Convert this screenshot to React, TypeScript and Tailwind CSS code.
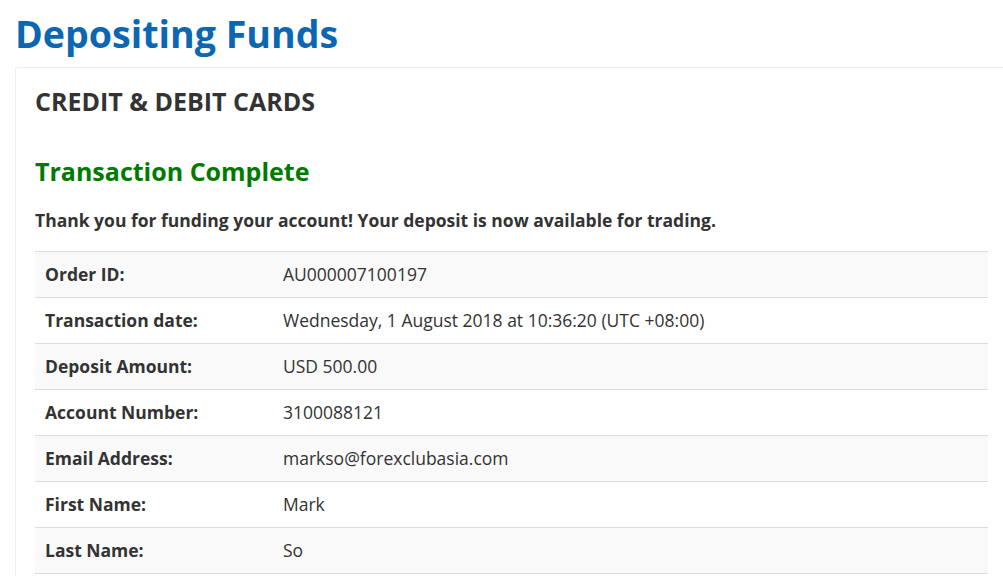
const rows: { label: string; value: string }[] = [
  { label: "Order ID:", value: "AU000007100197" },
  { label: "Transaction date:", value: "Wednesday, 1 August 2018 at 10:36:20 (UTC +08:00)" },
  { label: "Deposit Amount:", value: "USD 500.00" },
  { label: "Account Number:", value: "3100088121" },
  { label: "Email Address:", value: "markso@forexclubasia.com" },
  { label: "First Name:", value: "Mark" },
  { label: "Last Name:", value: "So" },
];

export default function App() {
  return (
    <div className="w-full overflow-hidden bg-white font-['Open_Sans',sans-serif] text-[#333]">
      <div className="w-[1023px] px-[15px] pb-10">
        {/* Page title */}
        <h1 className="mt-[14px] mb-[13px] text-[37.6px] leading-[40px] font-bold text-[#0b67b2]">
          Depositing Funds
        </h1>

        {/* Card */}
        <div className="rounded-[3px] border border-[#eee] p-[19px] pt-[20px]">
          <h2 className="text-[25px] leading-[26px] font-bold text-[#333]">CREDIT &amp; DEBIT CARDS</h2>

          <h3 className="mt-[43px] text-[25px] leading-[29px] font-bold text-[#007a00]">
            Transaction Complete
          </h3>

          <p className="mt-[22px] mb-[19px] text-[17.5px] leading-[24px] font-bold">
            Thank you for funding your account! Your deposit is now available for trading.
          </p>

          <table className="w-full border-collapse text-[17.5px]">
            <tbody>
              {rows.map((row, i) => (
                <tr key={row.label} className={i % 2 === 0 ? "bg-[#f9f9f9]" : "bg-white"}>
                  <td className="w-[248px] border-y border-[#ddd] px-[10px] py-[10px] leading-[25px] font-bold">
                    {row.label}
                  </td>
                  <td className="border-y border-[#ddd] px-0 py-[10px] leading-[25px]">{row.value}</td>
                </tr>
              ))}
            </tbody>
          </table>
        </div>
      </div>
    </div>
  );
}
